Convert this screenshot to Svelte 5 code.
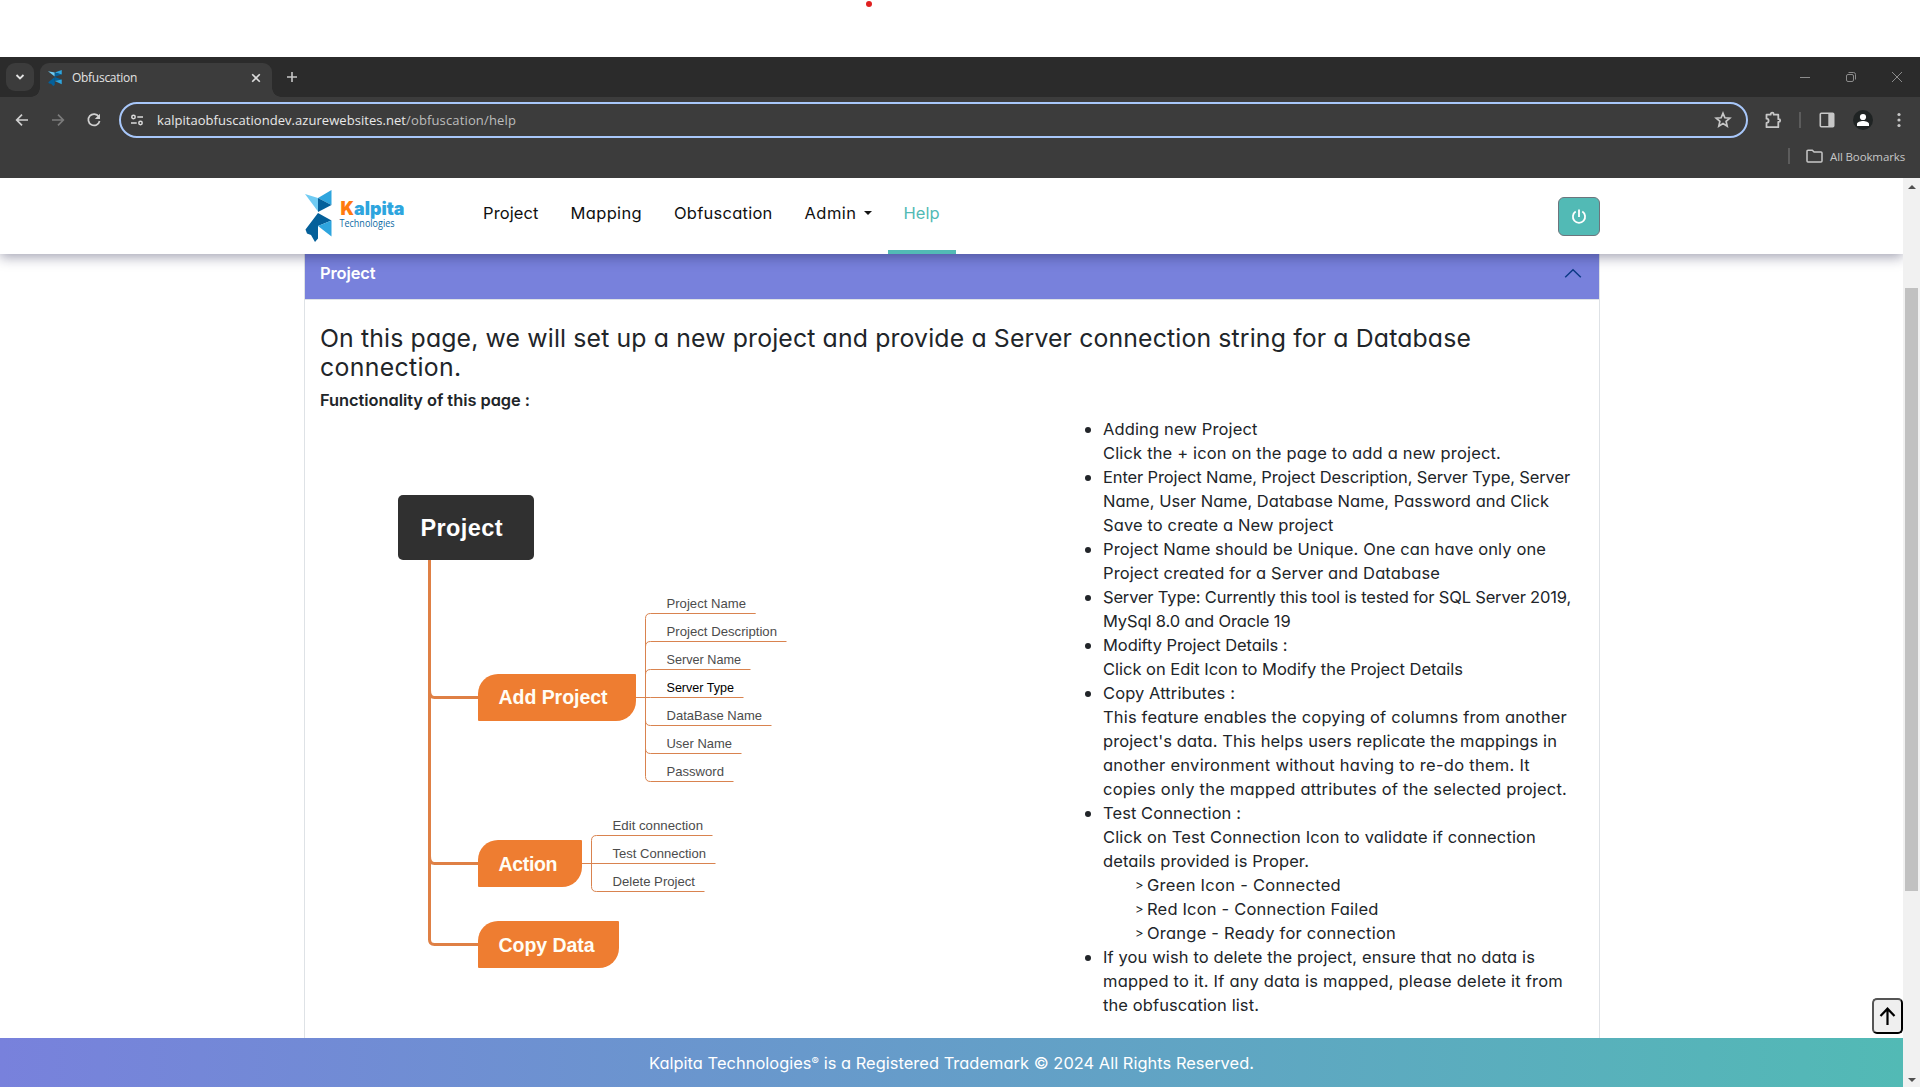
<script>
  // Spreads the letters of a single line so that it spans a given width.
  function fit(node, width) {
    node.style.letterSpacing = '0px';
    const natural = node.getBoundingClientRect().width;
    const count = node.textContent.length;
    node.style.letterSpacing = (width - natural) / count + 'px';
  }

  const nav = [
    { label: 'Project', width: 55.5 },
    { label: 'Mapping', width: 71.5 },
    { label: 'Obfuscation', width: 98.5 },
    { label: 'Admin', width: 52, menu: true },
    { label: 'Help', width: 36, active: true }
  ];

  const notes = [
    [['Adding new Project', 154.5], ['Click the + icon on the page to add a new project.', 398]],
    [
      ['Enter Project Name, Project Description, Server Type, Server', 467],
      ['Name, User Name, Database Name, Password and Click', 446],
      ['Save to create a New project', 230.5]
    ],
    [['Project Name should be Unique. One can have only one', 443], ['Project created for a Server and Database', 337]],
    [['Server Type: Currently this tool is tested for SQL Server 2019,', 468], ['MySql 8.0 and Oracle 19', 187.5]],
    [['Modifty Project Details :', 184.5], ['Click on Edit Icon to Modify the Project Details', 360]],
    [
      ['Copy Attributes :', 132],
      ['This feature enables the copying of columns from another', 464],
      ["project's data. This helps users replicate the mappings in", 454],
      ['another environment without having to re-do them. It', 427],
      ['copies only the mapped attributes of the selected project.', 464]
    ],
    [
      ['Test Connection :', 138],
      ['Click on Test Connection Icon to validate if connection', 433],
      ['details provided is Proper.', 206],
      ['Green Icon - Connected', 194, true],
      ['Red Icon - Connection Failed', 231.5, true],
      ['Orange - Ready for connection', 249, true]
    ],
    [
      ['If you wish to delete the project, ensure that no data is', 432],
      ['mapped to it. If any data is mapped, please delete it from', 460],
      ['the obfuscation list.', 156]
    ]
  ];

  // Diagram: [label, baseline y, text width, underline end x]
  const fields = [
    ['Project Name', 608, 79.5, 755.7],
    ['Project Description', 636, 110.5, 786.5],
    ['Server Name', 664, 74.5, 750.5],
    ['Server Type', 692, 67.5, 743.5],
    ['DataBase Name', 720, 95.5, 771.5],
    ['User Name', 748, 65.5, 741.5],
    ['Password', 776, 57.5, 733.5]
  ];
  const actions = [
    ['Edit connection', 830, 90.5, 712.5],
    ['Test Connection', 858, 93.5, 715.5],
    ['Delete Project', 886, 82.5, 704.5]
  ];
</script>

{#snippet bird()}
  <polygon points="0,4 13,8 13,21.5" fill="#6fcbf3" />
  <polygon points="13,8 26.5,0 26.5,15" fill="#2ea5de" />
  <polygon points="13,8 26.5,15 13,22" fill="#04609a" />
  <polygon points="13,23 .5,39.5 2,43.5 6,45 10,52 13,48.5" fill="#04609a" />
  <polygon points="13,23 26.5,30.5 13,36" fill="#04609a" />
  <polygon points="13,36 26.5,30.5 26.5,46.5" fill="#2ea5de" />
{/snippet}

<div class="page">
  <div class="top"><span class="dot"></span></div>

  <div class="tabstrip">
    <div class="tabsearch">
      <svg width="10" height="10" viewBox="0 0 10 10"><path d="M1.5 3l3.5 3.5L8.500 3" fill="none" stroke="#e3e3e3" stroke-width="1.8" /></svg>
    </div>
    <div class="tab">
      <svg class="fav" width="14" height="16" viewBox="0 0 27 52" preserveAspectRatio="none">{@render bird()}</svg>
      <span class="title"><span class="line" use:fit={65}>Obfuscation</span></span>
      <svg width="10" height="10" viewBox="0 0 10 10"><path d="M1.200 1.200l7.600 7.600M8.800 1.200L1.200 8.800" stroke="#dcdcdc" stroke-width="1.6" /></svg>
    </div>
    <svg class="plus" width="12" height="12" viewBox="0 0 12 12"><path d="M6 1v10M1 6h10" stroke="#c7c7c7" stroke-width="1.6" /></svg>
    <div class="window">
      <svg width="12" height="12" viewBox="0 0 12 12"><path d="M1 6.500h10" stroke="#8c8c8c" /></svg>
      <svg width="12" height="12" viewBox="0 0 12 12" fill="none" stroke="#8c8c8c"><rect x="1.500" y="3.500" width="7" height="7" rx="1.500" /><path d="M3.500 1.500h5a2 2 0 0 1 2 2v5" /></svg>
      <svg width="12" height="12" viewBox="0 0 12 12"><path d="M1 1l10 10M11 1L1 11" stroke="#8c8c8c" /></svg>
    </div>
  </div>

  <div class="chrome">
    <div class="toolbar">
      <svg width="16" height="16" viewBox="0 0 16 16" fill="none" stroke="#d0d0d0" stroke-width="1.7"><path d="M14 8H3M8 2.700L2.700 8 8 13.300" /></svg>
      <svg width="16" height="16" viewBox="0 0 16 16" fill="none" stroke="#7b7b7b" stroke-width="1.7"><path d="M2 8h11M8 2.700L13.300 8 8 13.300" /></svg>
      <svg width="16" height="16" viewBox="0 0 16 16"><path d="M12.800 4.600A5.700 5.700 0 1 0 13.600 9" fill="none" stroke="#d0d0d0" stroke-width="1.700" /><path d="M14 1.800v5.200H8.800z" fill="#d0d0d0" /></svg>
      <div class="address">
        <svg width="14" height="14" viewBox="0 0 14 14" fill="none" stroke="#dadada" stroke-width="1.500"><circle cx="3.500" cy="4" r="1.700" /><path d="M7.300 4H13M1 10h5.700" /><circle cx="10.500" cy="10" r="1.700" /></svg>
        <span class="url"><span class="line" use:fit={249}>kalpitaobfuscationdev.azurewebsites.net</span><span class="line dim" use:fit={110}>/obfuscation/help</span></span>
        <svg class="star" width="18" height="18" viewBox="0 0 18 18"><path d="M9 2.300l1.900 4.500 4.900.4-3.700 3.200 1.100 4.800L9 12.600l-4.200 2.600 1.100-4.800-3.700-3.200 4.900-.4z" fill="none" stroke="#c7c7c7" stroke-width="1.700" /></svg>
      </div>
      <div class="tools">
        <svg width="18" height="18" viewBox="0 0 18 18"><path d="M2.500 3.700h4.200v-.5a1.500 1.500 0 0 1 3 0v.5h4.600v4.500h.6a1.300 1.300 0 0 1 0 2.600h-.6v5.400H2.500v-4.300a2.100 2.100 0 0 0 0-4.200z" fill="none" stroke="#c7c7c7" stroke-width="1.800" stroke-linejoin="round" /></svg>
        <i class="sep"></i>
        <svg width="16" height="16" viewBox="0 0 16 16"><rect x="1.300" y="1.300" width="13.400" height="13.400" rx="1" fill="none" stroke="#c7c7c7" stroke-width="1.600" /><path d="M9.300 2h5.400v12H9.300z" fill="#c7c7c7" /></svg>
        <svg width="20" height="20" viewBox="0 0 20 20"><circle cx="10" cy="10" r="10" fill="#1f2323" /><circle cx="10" cy="7" r="3.100" fill="#fff" /><path d="M4 16v-2c0-2 3.500-3 6-3s6 1 6 3v2z" fill="#fff" /></svg>
        <svg class="more" width="4" height="16" viewBox="0 0 4 16" fill="#c7c7c7"><circle cx="2" cy="2.500" r="1.600" /><circle cx="2" cy="8" r="1.600" /><circle cx="2" cy="13.500" r="1.600" /></svg>
      </div>
    </div>
    <div class="bookmarks">
      <i class="sep"></i>
      <svg width="17" height="14" viewBox="0 0 17 14"><path d="M1 2.200a1 1 0 0 1 1-1h4.300l1.800 1.900H15a1 1 0 0 1 1 1V12a1 1 0 0 1-1 1H2a1 1 0 0 1-1-1z" fill="none" stroke="#c7c7c7" stroke-width="1.500" /></svg>
      <span class="line" use:fit={75}>All Bookmarks</span>
    </div>
  </div>

  <div class="view">
    <div class="site">
      <header>
        <svg class="logo" width="102" height="54" viewBox="0 0 102 54">
          {@render bird()}
          <text class="brand" y="24.500" x="35.500" textLength="64" lengthAdjust="spacingAndGlyphs"><tspan fill="#ff7a0f">K</tspan><tspan fill="#2ea5de">alpita</tspan></text>
          <text class="tag" x="34.500" y="37" textLength="55" lengthAdjust="spacingAndGlyphs">Technologies</text>
        </svg>
        <nav>
          {#each nav as item}
            <a class:active={item.active} href="#top"><span class="line" use:fit={item.width}>{item.label}</span>{#if item.menu}<i class="caret"></i>{/if}</a>
          {/each}
        </nav>
        <button class="power" aria-label="Log out">
          <svg width="16" height="16" viewBox="0 0 16 16" fill="none" stroke="#fff" stroke-width="1.800"><path d="M8 .5v7.500M4.700 2.600a6.100 6.100 0 1 0 6.600 0" /></svg>
        </button>
      </header>

      <main>
        <div class="bar">
          <span class="line" use:fit={55.5}>Project</span>
          <svg width="18" height="10" viewBox="0 0 18 10"><path d="M1.200 9.300L9 1.800l7.800 7.500" fill="none" stroke="#0c3a86" stroke-width="1.500" /></svg>
        </div>
        <section>
          <h4>
            <span class="line" use:fit={1151}>On this page, we will set up a new project and provide a Server connection string for a Database</span><br />
            <span class="line" use:fit={141.5}>connection.</span>
          </h4>
          <p class="sub"><span class="line" use:fit={210}>Functionality of this page :</span></p>
          <div class="cols">
            <svg class="map" width="480" height="520" viewBox="380 480 480 520">
              <g fill="none" stroke="#df8045" stroke-width="3">
                <path d="M429.500 559V939.500q0 5 5 5H480M429.500 690q0 7.500 5 7.500H480M429.500 856q0 7.500 5 7.500H480" />
              </g>
              <rect x="398" y="495" width="136" height="65" rx="5" fill="#303030" />
              <g fill="#ee7d31">
                <path d="M498 674H635a1 1 0 0 1 1 1V701a20 20 0 0 1-20 20H479a1 1 0 0 1-1-1V694a20 20 0 0 1 20-20z" />
                <path d="M498 840H581a1 1 0 0 1 1 1V867a20 20 0 0 1-20 20H479a1 1 0 0 1-1-1V860a20 20 0 0 1 20-20z" />
                <path d="M498 921H618a1 1 0 0 1 1 1V948a20 20 0 0 1-20 20H479a1 1 0 0 1-1-1V941a20 20 0 0 1 20-20z" />
              </g>
              <g class="node">
                <text class="root" x="420.500" y="536" textLength="82">Project</text>
                <text x="498.500" y="704" textLength="109">Add Project</text>
                <text x="498.500" y="871" textLength="59">Action</text>
                <text x="498.500" y="952" textLength="96">Copy Data</text>
              </g>
              <g fill="none" stroke="#d9834f">
                <path d="M636 697.500H650M582 863.500H600" />
                {#each fields as [, y, , end], i}
                  <path d="M645.500 697.500V{y + 5.5 + (i < 3 ? 5 : i > 3 ? -5 : 0)}Q645.500 {y + 5.5} 650.500 {y + 5.5}H{end}" />
                {/each}
                {#each actions as [, y, , end], i}
                  <path d="M591.500 863.500V{y + 5.5 + (i < 1 ? 5 : i > 1 ? -5 : 0)}Q591.500 {y + 5.5} 596.500 {y + 5.5}H{end}" />
                {/each}
              </g>
              <g class="leaf">
                {#each fields as [label, y, width]}
                  <text class:strong={label === 'Server Type'} x="666.500" {y} textLength={width} lengthAdjust="spacingAndGlyphs">{label}</text>
                {/each}
                {#each actions as [label, y, width]}
                  <text x="612.500" {y} textLength={width} lengthAdjust="spacingAndGlyphs">{label}</text>
                {/each}
              </g>
            </svg>
            <ul>
              {#each notes as lines}
                <li>
                  {#each lines as [text, width, nested]}
                    <div class:nested>{#if nested}<span class="mark">&gt;</span>{/if}<span class="line" use:fit={width}>{text}</span></div>
                  {/each}
                </li>
              {/each}
            </ul>
          </div>
        </section>
      </main>

      <button class="totop" aria-label="Back to top">
        <svg width="17" height="19" viewBox="0 0 17 19" fill="none" stroke="#000" stroke-width="2.200"><path d="M8.500 18V2M1.500 9l7-7.300 7 7.300" /></svg>
      </button>
      <footer><span class="line" use:fit={605}>Kalpita Technologies<sup>®</sup> is a Registered Trademark © 2024 All Rights Reserved.</span></footer>
    </div>

    <div class="scroll">
      <svg width="8" height="4" viewBox="0 0 8 4"><path d="M0 4l4-4 4 4z" fill="#505050" /></svg>
      <div class="thumb"></div>
      <svg width="8" height="4" viewBox="0 0 8 4"><path d="M0 0l4 4 4-4z" fill="#505050" /></svg>
    </div>
  </div>
</div>

<style>
  :global(body) { margin: 0; background: #fff; }
  .page { width: 1920px; height: 1087px; overflow: hidden; display: flex; flex-direction: column; font-family: Inter, sans-serif; font-feature-settings: 'cv11'; color: #212529; }
  .page * { box-sizing: border-box; }
  svg { display: block; flex: none; }
  .line { display: inline-block; white-space: nowrap; }

  .top { height: 57px; flex: none; padding: 1px 0 0 866px; }
  .dot { display: block; width: 6px; height: 6px; border-radius: 50%; background: #e02020; }

  .tabstrip { height: 40px; flex: none; background: #2b2b2b; display: flex; align-items: flex-start; padding: 6px 17px 0 6px; font: 12px 'Open Sans', sans-serif; }
  .tabsearch { width: 28px; height: 28px; border-radius: 9px; background: #3c3c3c; display: flex; align-items: center; justify-content: center; }
  .tab { position: relative; width: 232px; height: 34px; margin-left: 6px; padding: 0 11px 5px 8px; border-radius: 9px 9px 0 0; background: #3c3c3c; display: flex; align-items: center; color: #e3e3e3; }
  .tab::before, .tab::after { content: ''; position: absolute; bottom: 0; width: 9px; height: 9px; }
  .tab::before { left: -9px; background: radial-gradient(circle at 0 0, #2b2b2b 8.5px, #3c3c3c 9px); }
  .tab::after { right: -9px; background: radial-gradient(circle at 100% 0, #2b2b2b 8.5px, #3c3c3c 9px); }
  .title { margin-left: 10px; flex: 1; }
  .plus { margin: 8px 0 0 14px; }
  .window { margin-left: auto; display: flex; gap: 34px; padding-top: 8px; }

  .chrome { height: 81px; flex: none; background: #3c3c3c; display: flex; flex-direction: column; }
  .toolbar { display: flex; align-items: center; height: 46px; padding: 0 20px 0 14px; }
  .toolbar > svg { margin-right: 20px; }
  .address { width: 1629px; height: 36px; margin-left: -3px; border: 2px solid #a8c7fa; border-radius: 18px; display: flex; align-items: center; padding: 0 14px 0 9px; }
  .url { margin-left: 13px; flex: 1; font: 13px 'Open Sans', sans-serif; color: #e8e8e8; display: flex; }
  .dim { color: #bdbdbd; }
  .tools { display: flex; align-items: center; gap: 18px; padding-left: 16px; margin-right: -1px; }
  .tools .sep { margin-left: -1px; }
  .more { margin-left: 6px; }
  .sep { width: 2px; height: 16px; background: #5c5c5c; }
  .bookmarks { display: flex; align-items: center; justify-content: flex-end; height: 28px; padding: 0 15px 2px 0; font: 11.500px 'Open Sans', sans-serif; color: #c7c7c7; }
  .bookmarks svg { margin: 0 7px 0 16px; }

  .view { flex: 1; min-height: 0; display: flex; }
  .site { flex: 1; position: relative; display: flex; flex-direction: column; overflow: hidden; }
  header { position: relative; z-index: 1; height: 76px; flex: none; background: #fff; box-shadow: 0 3px 12px rgba(20, 20, 60, .4); display: flex; padding: 0 303px 0 304.500px; }
  .logo { margin-top: 12px; }
  .brand { font: 900 18.500px Inter, sans-serif; }
  .tag { font: 10.500px 'Open Sans', sans-serif; fill: #0d6aa3; }
  nav { display: flex; margin-left: 60.500px; }
  nav a { display: flex; align-items: center; padding: 0 16px 2px; border-bottom: 4px solid transparent; font-size: 16.500px; color: #101010; text-decoration: none; }
  nav a.active { color: #52bab5; border-color: #52bab5; }
  .caret { margin-left: 7px; border: solid transparent; border-width: 4.500px 4.500px 0; border-top-color: #151515; }
  .power { width: 42px; height: 39px; margin: 19px 0 0 auto; padding: 0; display: flex; align-items: center; justify-content: center; background: #52bab5; border: 1px solid #6c757d; border-radius: 6px; }

  main { width: 1296px; margin-left: 304px; flex: 1; min-height: 0; border: solid #dee2e6; border-width: 0 1px; }
  .bar { height: 45px; background: #7881dc; display: flex; align-items: center; justify-content: space-between; padding: 0 17px 7px 15px; color: #fff; font-weight: 600; font-size: 16.500px; }
  section { border-top: 1px solid #dee2e6; padding: 24px 15px 0; }
  h4 { margin: 0; font-size: 24.800px; line-height: 28.800px; font-weight: 400; }
  .sub { margin: 6px 0 0; font-size: 16.400px; line-height: 24px; font-weight: 600; }
  .cols { display: flex; justify-content: space-between; }
  .map { margin: 68px 0 0 60px; }
  .node text { font: bold 19.500px 'Liberation Sans', sans-serif; fill: #fffdf5; }
  .node .root { font-size: 23.500px; fill: #fff; }
  .leaf text { font: 13.300px 'Liberation Sans', sans-serif; fill: #4c4c4c; }
  .leaf .strong { fill: #000; }
  ul { width: 481px; margin: 5px 0 0; padding: 0; list-style: none; font-size: 16.500px; line-height: 24px; }
  li { position: relative; }
  li::before { content: ''; position: absolute; left: -18px; top: 10px; width: 6px; height: 6px; border-radius: 50%; background: #212529; }
  li div { height: 24px; }
  .nested { display: flex; padding-left: 32px; }
  .mark { width: 12px; font-size: 13px; }

  .totop { position: absolute; right: 0; bottom: 53px; width: 31px; height: 36px; padding: 0; display: flex; align-items: center; justify-content: center; background: #efefef; border: 2px solid; border-color: #555 #000 #000 #555; border-radius: 5px; }
  footer { height: 49px; flex: none; display: flex; align-items: center; justify-content: center; background: linear-gradient(90deg, #7881dc, #52bab5); color: #fff; font-size: 16.400px; }
  sup { font-size: 11px; line-height: 0; vertical-align: 4px; }

  .scroll { width: 17px; flex: none; background: #f1f1f1; display: flex; flex-direction: column; align-items: center; padding: 7px 0 5px; }
  .thumb { width: 13px; height: 603px; margin: 99px 0 auto; background: #c1c1c1; }
</style>
